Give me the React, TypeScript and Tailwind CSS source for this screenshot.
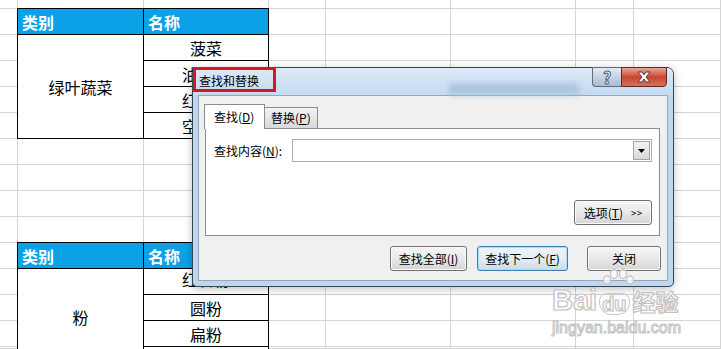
import React from "react";

const FONT = "font-['Noto_Sans_CJK_SC','Noto_Sans',sans-serif]";

const bodyCell =
    "flex items-center justify-center border-r border-b border-black bg-white text-[16px] text-black";
const headCell =
    "flex items-center pl-1 -mt-px border-t border-r border-b border-black bg-[#0aa1e6] text-[16px] font-bold text-white";

function Btn({ children, w, focus }: { children: React.ReactNode; w: string; focus?: boolean }) {
    return (
        <div
            className={`${w} flex h-[25px] items-center justify-center rounded-[3px] border text-[12px] leading-none text-black ${
                focus
                    ? "border-[#3c7fb1] bg-linear-to-b from-[#eef5fa] via-[#e3edf4] to-[#cddbe6] shadow-[inset_0_0_0_1px_#a9dcf6]"
                    : "border-[#707070] bg-linear-to-b from-[#f6f6f6] via-[#e9e9e9] to-[#d5d5d5] shadow-[inset_0_0_0_1px_#fbfbfb]"
            }`}
        >
            {children}
        </div>
    );
}

function Dialog() {
    return (
        <div className="absolute left-[192px] top-[67px] z-10 flex h-[220px] w-[482px] flex-col rounded-t-[7px] rounded-b-[5px] border border-[#3b4653] bg-[#bed6ee] shadow-[0_2px_8px_rgba(0,0,0,0.25)]">
            {/* title bar */}
            <div className="relative flex h-[27px] shrink-0 rounded-t-[6px] bg-linear-to-b from-[#dde9f6] to-[#c3daf1]">
                <span className="pl-[6px] pt-[5px] text-[12px] leading-[16px] text-black">查找和替换</span>
                <div className="absolute left-[256px] top-[15px] h-[12px] w-[130px] bg-[#9dbcd8] opacity-70 blur-[3px]" />
                <div className="-mt-px ml-auto mr-[6px] flex h-[20px]">
                    <div className="flex w-[29px] items-center justify-center rounded-bl-[4px] border border-r-0 border-[#5f6e7e] bg-linear-to-b from-[#e3ebf4] to-[#a8bcd2]">
                        <span className="text-[16px] font-bold leading-none text-white [-webkit-text-stroke:1px_#55606c]">
                            ?
                        </span>
                    </div>
                    <div className="flex w-[46px] items-center justify-center rounded-br-[4px] border border-[#5a2b23] bg-linear-to-b from-[#e9a597] via-[#c84530] to-[#d7705c]">
                        <svg width="14" height="12" viewBox="0 0 14 12">
                            <path
                                d="M1 1h4l2 3 2-3h4L9 6l4 5H9L7 8l-2 3H1l4-5z"
                                fill="#fff"
                                stroke="#4a2a24"
                                strokeWidth="0.9"
                            />
                        </svg>
                    </div>
                </div>
                <div className="absolute -top-px left-0 h-[25px] w-[83px] border-[3px] border-[#d8161e]" />
            </div>

            {/* client */}
            <div className="mx-[5px] flex h-[186px] shrink-0 flex-col border border-[#96a8ba] bg-[#f0f0f0]">
                <div className="flex items-end pl-[5px] pt-[8px]">
                    <div className="relative z-[1] -mb-px flex h-[25px] w-[61px] items-center border border-b-0 border-[#898c95] bg-white pl-[9px] text-[12px] text-black">
                        查找(<span className="underline">D</span>)
                    </div>
                    <div className="flex h-[21px] w-[53px] items-center border border-b-0 border-l-0 border-[#898c95] bg-linear-to-b from-[#f3f3f3] to-[#d9d9d9] pl-[6px] text-[12px] text-black">
                        替换(<span className="underline">P</span>)
                    </div>
                </div>
                <div className="ml-[6px] flex h-[108px] w-[455px] shrink-0 flex-col border border-[#898c95] bg-white">
                    <div className="mt-[10px] flex items-center">
                        <div className="w-[86px] pl-[8px] text-[12px] text-black">
                            查找内容(<span className="underline">N</span>):
                        </div>
                        <div className="flex h-[23px] w-[360px] justify-end border border-[#abadb3] bg-white p-px">
                            <div className="flex w-[17px] items-center justify-center border border-[#a3a3a3] bg-linear-to-b from-[#f4f4f4] to-[#d8d8d8]">
                                <svg width="7" height="4" viewBox="0 0 7 4">
                                    <path d="M0 0h7L3.5 4z" fill="#000" />
                                </svg>
                            </div>
                        </div>
                    </div>
                    <div className="mr-[7px] mt-[38px] flex justify-end">
                        <Btn w="w-[78px]">
                            <span>
                                选项(<span className="underline">T</span>)
                            </span>
                            <span className="ml-[8px] text-[10px]">&gt;&gt;</span>
                        </Btn>
                    </div>
                </div>
                <div className="mt-[10px] flex justify-end pr-[6px]">
                    <Btn w="w-[77px]">
                        查找全部(<span className="underline">I</span>)
                    </Btn>
                    <div className="w-[10px]" />
                    <Btn w="w-[91px]" focus>
                        查找下一个(<span className="underline">F</span>)
                    </Btn>
                    <div className="w-[19px]" />
                    <Btn w="w-[74px]">关闭</Btn>
                </div>
            </div>
        </div>
    );
}

function Watermark() {
    return (
        <div className="pointer-events-none absolute left-[552px] top-[268px] z-20 flex flex-col">
            <svg width="40" height="20" viewBox="0 0 40 20" className="ml-[46px]">
                <g fill="rgba(255,255,255,0.75)" stroke="#c6c6c6" strokeWidth="1.4">
                    <ellipse cx="9" cy="12" rx="3.5" ry="4" />
                    <ellipse cx="16" cy="6" rx="3.5" ry="4.5" />
                    <ellipse cx="25" cy="6" rx="3.5" ry="4.5" />
                    <ellipse cx="32" cy="12" rx="3.5" ry="4" />
                </g>
            </svg>
            <div className="-mt-[2px] flex items-end font-['Liberation_Sans','Noto_Sans_CJK_SC',sans-serif] leading-none text-white/75 [-webkit-text-stroke:1.2px_#c2c2c2]">
                <span className="text-[29px] font-bold">Bai</span>
                <span className="ml-[2px] rounded-b-[12px] rounded-t-[8px] border-[1.5px] border-[#c6c6c6] px-[2px] text-[20px] font-bold">
                    du
                </span>
                <span className="ml-[3px] text-[23px] font-bold">经验</span>
            </div>
            <div className="mt-[5px] font-['Liberation_Sans',sans-serif] text-[16px] leading-none text-white/75 [-webkit-text-stroke:1px_#c2c2c2]">
                jingyan.baidu.com
            </div>
        </div>
    );
}

export default function App() {
    return (
        <div className={`relative h-[349px] w-[721px] overflow-hidden bg-white ${FONT}`}>
            <div className="grid h-full grid-cols-[18px_126px_125px_57px_125px_125px_58px_1fr] grid-rows-[9px_repeat(13,26px)_1fr]">
                {Array.from({ length: 100 }).map((_, i) => (
                    <div key={i} className="border-r border-b border-[#d4d4d4]" />
                ))}

                {/* table 1 */}
                <div className={`${headCell} col-start-2 row-start-2 -ml-px border-l`}>类别</div>
                <div className={`${headCell} col-start-3 row-start-2`}>名称</div>
                <div className={`${bodyCell} col-start-2 row-start-3 row-span-4 -ml-px border-l`}>绿叶蔬菜</div>
                <div className={`${bodyCell} col-start-3 row-start-3`}>菠菜</div>
                <div className={`${bodyCell} col-start-3 row-start-4`}>油麦菜</div>
                <div className={`${bodyCell} col-start-3 row-start-5`}>红苋菜</div>
                <div className={`${bodyCell} col-start-3 row-start-6`}>空心菜</div>

                {/* table 2 */}
                <div className={`${headCell} col-start-2 row-start-11 -ml-px border-l`}>类别</div>
                <div className={`${headCell} col-start-3 row-start-11`}>名称</div>
                <div className="col-start-2 row-start-12 row-span-4 -ml-px flex items-start justify-center border-l border-r border-black bg-white pt-[36px] text-[16px] text-black">
                    粉
                </div>
                <div className={`${bodyCell} col-start-3 row-start-12 pb-[6px]`}>红薯粉</div>
                <div className={`${bodyCell} col-start-3 row-start-13`}>圆粉</div>
                <div className={`${bodyCell} col-start-3 row-start-14`}>扁粉</div>
                <div className="col-start-3 row-start-15 border-r border-black bg-white" />
            </div>
            <Dialog />
            <Watermark />
        </div>
    );
}
